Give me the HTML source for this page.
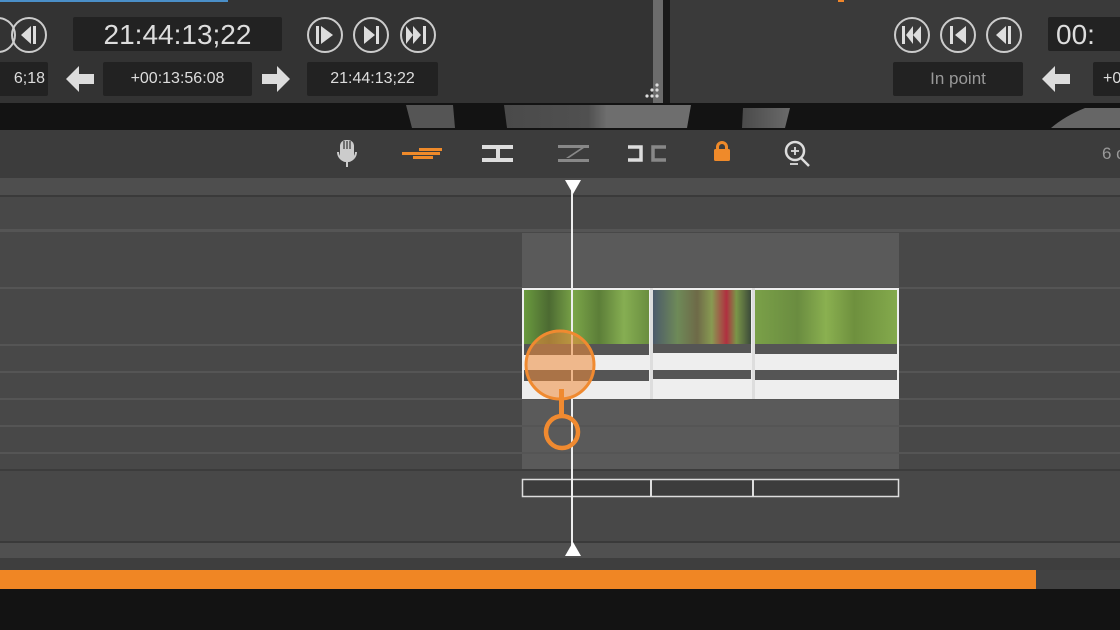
<!DOCTYPE html>
<html><head><meta charset="utf-8">
<style>
html,body{margin:0;padding:0;width:1120px;height:630px;overflow:hidden;background:#131313;font-family:"Liberation Sans","DejaVu Sans",sans-serif}
.a{position:absolute}
.tc{position:absolute;background:#222;color:#ddd;text-align:center;border-radius:2px;white-space:nowrap}
</style></head><body>
<div class="a" style="left:0;top:0;width:1120px;height:630px">
<div class="a" style="left:0;top:0;width:653px;height:103px;background:#333"></div>
<div class="a" style="left:0;top:0;width:228px;height:2px;background:#4a8fc8"></div>
<div class="a" style="left:653px;top:0;width:10px;height:103px;background:#6c6c6c"></div>
<div class="a" style="left:663px;top:0;width:7px;height:103px;background:#1a1a1a"></div>
<div class="a" style="left:670px;top:0;width:450px;height:103px;background:#3a3a3a"></div>
<div class="a" style="left:838px;top:0;width:6px;height:2px;background:#f0862a"></div>
<div class="tc" style="left:73px;top:17px;width:209px;height:34px;font-size:28px;line-height:35px">21:44:13;22</div>
<div class="tc" style="left:-20px;top:62px;width:65px;height:34px;font-size:16px;line-height:34px;text-align:right;padding-right:3px">6;18</div>
<div class="tc" style="left:103px;top:62px;width:149px;height:34px;font-size:16px;line-height:34px">+00:13:56:08</div>
<div class="tc" style="left:307px;top:62px;width:131px;height:34px;font-size:16px;line-height:34px">21:44:13;22</div>
<div class="tc" style="left:1048px;top:17px;width:90px;height:34px;font-size:28px;line-height:35px;text-align:left;padding-left:8px">00:</div>
<div class="tc" style="left:893px;top:62px;width:130px;height:34px;font-size:17px;line-height:34px;color:#999">In point</div>
<div class="tc" style="left:1093px;top:62px;width:40px;height:34px;font-size:16px;line-height:34px;text-align:left;padding-left:10px">+0</div>
<svg class="a" style="left:0;top:0" width="1120" height="103">
<g fill="none" stroke="#ccc" stroke-width="2">
<circle cx="-2" cy="35" r="17"/><circle cx="29" cy="35" r="17"/>
<circle cx="325" cy="35" r="17"/><circle cx="371" cy="35" r="17"/><circle cx="418" cy="35" r="17"/>
<circle cx="912" cy="35" r="17"/><circle cx="958" cy="35" r="17"/><circle cx="1004" cy="35" r="17"/>
</g>
<g fill="#ddd">
<path d="M21 35l10-9v18z"/><rect x="33" y="26" width="3" height="18"/>
<rect x="316" y="26" width="3" height="18"/><path d="M321 26l12 9-12 9z"/>
<path d="M364 26l11 9-11 9z"/><rect x="376" y="26" width="3" height="18"/>
<path d="M406 26l7 9-7 9z"/><path d="M413 26l8 9-8 9z"/><rect x="423" y="26" width="3" height="18"/>
<rect x="902" y="26" width="3" height="18"/><path d="M913 26l-7 9 7 9z"/><path d="M921 26l-8 9 8 9z"/>
<rect x="950" y="26" width="3" height="18"/><path d="M966 26l-11 9 11 9z"/>
<path d="M996 35l10-9v18z"/><rect x="1008" y="26" width="3" height="18"/>
<path d="M66 79l13-13v8h15v10h-15v8z"/>
<path d="M290 79l-13-13v8h-15v10h15v8z"/>
<path d="M1042 79l13-13v8h15v10h-15v8z"/>
<circle cx="657" cy="85" r="1.6"/><circle cx="652" cy="90" r="1.6"/><circle cx="657" cy="90" r="1.6"/><circle cx="647" cy="96" r="1.6"/><circle cx="652" cy="96" r="1.6"/><circle cx="657" cy="96" r="1.6"/>
</g>
</svg>
<svg class="a" style="left:0;top:103px" width="1120" height="27">
<defs><linearGradient id="g1" x1="0" x2="1"><stop offset="0" stop-color="#4a4a4a"/><stop offset=".45" stop-color="#505050"/><stop offset=".55" stop-color="#6e6e6e"/><stop offset="1" stop-color="#6e6e6e"/></linearGradient>
<linearGradient id="g2" x1="0" x2="1"><stop offset="0" stop-color="#4a4a4a"/><stop offset="1" stop-color="#6a6a6a"/></linearGradient></defs>
<path d="M406 2h47l2 23h-43z" fill="#555"/>
<path d="M504 2h187l-4 23h-180z" fill="url(#g1)"/>
<path d="M743 5h47l-5 20h-43z" fill="url(#g2)"/>
<path d="M1120 5h-35q-20 8-34 20h69z" fill="#666"/>
</svg>
<div class="a" style="left:0;top:130px;width:1120px;height:48px;background:#3c3c3c"></div>
<div class="a" style="left:1102px;top:144px;font-size:17px;color:#999;white-space:nowrap">6 c</div>
<svg class="a" style="left:0;top:130px" width="1120" height="48">
<g fill="#ccc"><rect x="340" y="10" width="14" height="22" rx="6"/><path d="M337 22a10 10 0 0 0 20 0h-2a8 8 0 0 1-16 0z"/><rect x="346" y="30" width="2" height="7"/></g>
<g stroke="#333" stroke-width="1.2"><line x1="344" y1="11" x2="344" y2="19"/><line x1="347" y1="11" x2="347" y2="19"/><line x1="350" y1="11" x2="350" y2="19"/></g>
<g fill="#ef8a2a"><rect x="402" y="22" width="38" height="3"/><rect x="419" y="18" width="23" height="3"/><rect x="413" y="26" width="20" height="3"/></g>
<g fill="#ddd"><rect x="482" y="15" width="31" height="4"/><rect x="482" y="28" width="31" height="4"/><rect x="496" y="19" width="4" height="9"/></g>
<g fill="#888"><rect x="558" y="15" width="31" height="3"/><rect x="558" y="29" width="31" height="3"/><path d="M566 28l15-10h3l-15 10z"/></g>
<g fill="none" stroke-width="3.5"><path d="M628 17h13v13h-13" stroke="#ddd"/><path d="M666 17h-13v13h13" stroke="#888"/></g>
<g fill="#ef8a2a"><path d="M716 20v-3a6 6 0 0 1 12 0v3h-3v-3a3 3 0 0 0-6 0v3z"/><rect x="714" y="19" width="16" height="12" rx="1.5"/></g>
<g fill="none" stroke="#ddd" stroke-width="2.5"><circle cx="795" cy="21" r="9"/><line x1="801" y1="28" x2="809" y2="36"/></g>
<g stroke="#ddd" stroke-width="1.8"><line x1="791" y1="21" x2="799" y2="21"/><line x1="795" y1="17" x2="795" y2="25"/><line x1="790" y1="34" x2="798" y2="34"/></g>
</svg>
<div class="a" style="left:0;top:178px;width:1120px;height:17px;background:#4e4e4e"></div>
<div class="a" style="left:0;top:195px;width:1120px;height:2px;background:#3a3a3a"></div>
<div class="a" style="left:0;top:197px;width:1120px;height:345px;background:#484848"></div>
<div class="a" style="left:522px;top:233px;width:377px;height:237px;background:#5a5a5a"></div>
<svg class="a" style="left:0;top:0" width="1120" height="630">
<g fill="#555"><rect x="0" y="229" width="1120" height="3"/><rect x="0" y="287" width="1120" height="2"/><rect x="0" y="344" width="1120" height="2"/><rect x="0" y="371" width="1120" height="2"/><rect x="0" y="398" width="1120" height="2"/><rect x="0" y="425" width="1120" height="2"/><rect x="0" y="452" width="1120" height="2"/></g>
<rect x="0" y="469" width="1120" height="2" fill="#3c3c3c"/>
<rect x="0" y="541" width="1120" height="2" fill="#3a3a3a"/>
<rect x="0" y="543" width="1120" height="15" fill="#505050"/>
<rect x="0" y="558" width="1120" height="12" fill="#3e3e3e"/>
<rect x="0" y="570" width="1120" height="19" fill="#424242"/>
<rect x="0" y="570" width="1036" height="19" fill="#f08624"/>
<rect x="522" y="288" width="377" height="111" fill="#eee"/>
<defs>
<linearGradient id="v1" x1="0" x2="1"><stop offset="0" stop-color="#6a9a3e"/><stop offset=".2" stop-color="#4c6a32"/><stop offset=".4" stop-color="#7aa448"/><stop offset=".6" stop-color="#5c7e38"/><stop offset=".8" stop-color="#86ae52"/><stop offset="1" stop-color="#6a8e40"/></linearGradient>
<linearGradient id="v2" x1="0" x2="1"><stop offset="0" stop-color="#4c5a6a"/><stop offset=".25" stop-color="#6e8a58"/><stop offset=".45" stop-color="#6e6a48"/><stop offset=".6" stop-color="#889a52"/><stop offset=".75" stop-color="#b03040"/><stop offset=".85" stop-color="#7a9648"/><stop offset="1" stop-color="#3c4a3a"/></linearGradient>
<linearGradient id="v3" x1="0" x2="1"><stop offset="0" stop-color="#7aa048"/><stop offset=".3" stop-color="#6a8c40"/><stop offset=".5" stop-color="#8ab050"/><stop offset=".7" stop-color="#6e903e"/><stop offset="1" stop-color="#84aa4c"/></linearGradient>
</defs>
<rect x="524" y="290" width="125" height="54" fill="url(#v1)"/>
<rect x="653" y="290" width="98" height="54" fill="url(#v2)"/>
<rect x="755" y="290" width="142" height="54" fill="url(#v3)"/>
<g fill="#555"><rect x="524" y="344" width="125" height="11"/><rect x="653" y="344" width="98" height="9"/><rect x="755" y="344" width="142" height="10"/>
<rect x="524" y="370" width="125" height="11"/><rect x="653" y="370" width="98" height="9"/><rect x="755" y="370" width="142" height="10"/></g>
<g fill="#ddd"><rect x="650" y="288" width="3" height="111"/><rect x="752" y="288" width="3" height="111"/></g>
<rect x="522.5" y="479.5" width="376" height="17" fill="#3c3c3c" stroke="#ddd" stroke-width="1.5"/>
<rect x="650" y="479" width="2" height="18" fill="#ddd"/><rect x="752" y="479" width="2" height="18" fill="#ddd"/>
<rect x="571" y="190" width="2" height="360" fill="#eee"/>
<path d="M565 180h16l-8 14z" fill="#fff"/>
<path d="M565 556h16l-8-14z" fill="#fff"/>
<circle cx="560" cy="365" r="34" fill="rgba(240,140,60,0.55)" stroke="#f08a30" stroke-width="3"/>
<rect x="559" y="389" width="5" height="27" fill="#f08a30"/>
<circle cx="562" cy="432" r="16" fill="none" stroke="#f08a30" stroke-width="4.5"/>
</svg>
</div>
</body></html>
